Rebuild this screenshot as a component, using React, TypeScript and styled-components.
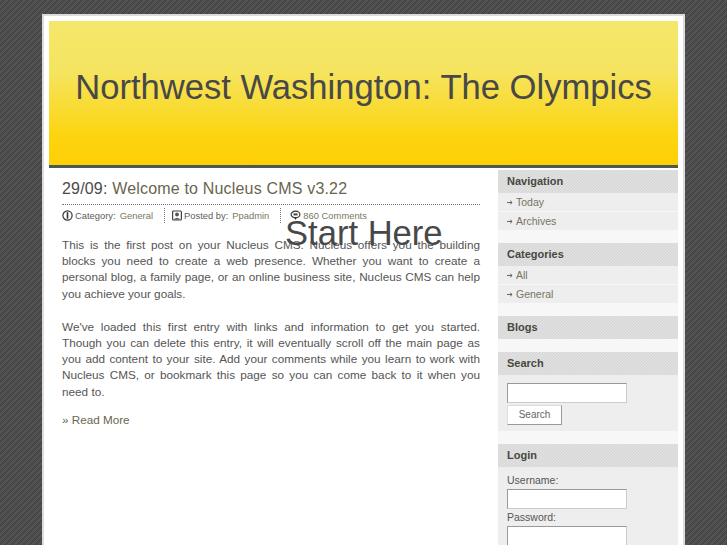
import React from "react";
import styled, { createGlobalStyle } from "styled-components";

const Global = createGlobalStyle`
  html, body { margin: 0; padding: 0; height: 545px; overflow: hidden; }
  body {
    background-color: #4a4a4a;
    background-image:
      repeating-conic-gradient(rgba(255,255,255,0.045) 0 25%, rgba(0,0,0,0.045) 0 50%),
      linear-gradient(135deg, #505050 25%, #454545 25%, #454545 50%, #505050 50%, #505050 75%, #454545 75%);
    background-size: 2px 2px, 6px 6px;
    font-family: "Liberation Sans", Arial, sans-serif;
  }
`;
const Page = styled.div`
  position: relative;
  width: 643px;
  height: 531px;
  margin: 14px 0 0 42px;
  box-sizing: border-box;
  background: #fff;
  border: 2px solid #dcdcdc;
  border-bottom: 0;
  padding: 5px 5px 0;
  overflow: hidden;
`;
const Header = styled.header`
  height: 144px;
  background: linear-gradient(#f4e76b 0%, #f5e460 35%, #fcd40f 80%, #ffcf05 100%);
  border-bottom: 3px solid #4b5858;
  display: flex;
  justify-content: center;
`;
const SiteTitle = styled.h1`
  margin: 46px 0 0;
  font-size: 34.6px;
  line-height: 40px;
  font-weight: 400;
  color: #484848;
  white-space: nowrap;
`;
const Columns = styled.div`
  display: flex;
  justify-content: space-between;
  background: #fff;
`;
const Main = styled.main`
  width: 418px;
  margin-left: 13px;
  padding-top: 11px;
`;
const PostTitle = styled.h2`
  margin: 0;
  font-size: 16px;
  line-height: 19px;
  font-weight: 400;
  color: #4a4a4a;
  letter-spacing: 0.18px;
  padding-bottom: 6px;
  border-bottom: 1px dotted #777;
  a { color: #68654f; }
`;
const Meta = styled.div`
  display: flex;
  height: 20px;
  align-items: center;
  font-size: 9.4px;
  color: #5c5c5c;
`;
const MetaItem = styled.span<{ $last?: boolean }>`
  display: flex;
  align-items: center;
  gap: ${(p) => (p.$last ? "0" : "2px")};
  height: 15px;
  padding-left: ${(p) => (p.$last ? "2px" : "0")};
  padding-right: 11px;
  margin-right: 7px;
  border-right: ${(p) => (p.$last ? "0" : "1px dotted #777")};
  a { color: #7a775f; margin-left: 2px; }
`;
const Para = styled.p`
  margin: 0 0 17px;
  font-size: 11.75px;
  line-height: 16.2px;
  color: #555;
  text-align: justify;
`;
const Body = styled.div`
  padding-top: 12px;
`;
const More = styled.div`
  font-size: 11.7px;
  color: #68654f;
  margin-top: -4px;
`;
const Overlay = styled.div`
  position: absolute;
  left: 241px;
  top: 197px;
  font-size: 34.6px;
  line-height: 40px;
  color: #484848;
  white-space: nowrap;
`;
const Side = styled.aside`
  width: 180px;
  background: #f7f7f7;
  margin-top: 2px;
  height: 380px;
`;
const SideHead = styled.h3`
  margin: 0;
  height: 23px;
  line-height: 22px;
  padding-left: 9px;
  font-size: 11px;
  font-weight: 700;
  color: #484840;
  background-image: linear-gradient(135deg, #d9d9d9 25%, #e3e3e3 25%, #e3e3e3 50%, #d9d9d9 50%, #d9d9d9 75%, #e3e3e3 75%);
  background-size: 3px 3px;
`;
const SideBlock = styled.section`
  margin-bottom: 13px;
`;
const Item = styled.div`
  display: flex;
  align-items: center;
  gap: 3px;
  height: 18px;
  margin-bottom: 1px;
  padding-left: 9px;
  background: #eee;
  font-size: 10.5px;
  color: #77745f;
`;
const Form = styled.div`
  background: #eee;
  padding: 8px 9px 6px;
  font-size: 10.5px;
  color: #555;
`;
const Input = styled.div`
  width: 120px;
  height: 20px;
  box-sizing: border-box;
  background: #fff;
  border: 1px solid #ccc;
  border-top-color: #999;
  border-left-color: #999;
`;
const Button = styled.div`
  width: 55px;
  height: 20px;
  margin-top: 2px;
  box-sizing: border-box;
  background: #fff;
  border: 1px solid #ddd;
  border-right-color: #999;
  border-bottom-color: #999;
  text-align: center;
  line-height: 17px;
  color: #666;
  font-size: 10px;
`;
const Label = styled.div`
  height: 17px;
  line-height: 17px;
  &:first-child { margin-top: -3px; }
`;

const Info = () => (
  <svg width="11" height="11" viewBox="0 0 11 11"><circle cx="5.5" cy="5.5" r="4.6" fill="none" stroke="#333" strokeWidth="1.2"/><rect x="4.7" y="2.2" width="1.6" height="6.5" fill="#333"/></svg>
);
const User = () => (
  <svg width="10" height="11" viewBox="0 0 10 11"><rect x="0.6" y="1" width="8.8" height="9" rx="1" fill="none" stroke="#444" strokeWidth="1.2"/><circle cx="5" cy="4.5" r="1.9" fill="#555"/><path d="M2 9.5c.5-2 5.5-2 6 0z" fill="#555"/></svg>
);
const Bubble = () => (
  <svg width="11" height="11" viewBox="0 0 11 11"><ellipse cx="5.5" cy="4.5" rx="4.4" ry="3.3" fill="none" stroke="#333" strokeWidth="1.2"/><path d="M4 7l1.5 3 1.5-3z" fill="#333"/><rect x="3.5" y="3.4" width="4" height="2" fill="#444"/></svg>
);
const Arrow = () => (
  <svg width="6" height="5" viewBox="0 0 6 5"><path d="M0 2.5h5M3.2 .8l1.9 1.7-1.9 1.7" fill="none" stroke="#555" strokeWidth="0.9"/></svg>
);

export default function App() {
  return (
    <>
      <Global />
      <Page>
        <Header><SiteTitle>Northwest Washington: The Olympics</SiteTitle></Header>
        <Columns>
          <Main>
            <PostTitle>29/09: <a>Welcome to Nucleus CMS v3.22</a></PostTitle>
            <Meta>
              <MetaItem><Info />Category: <a>General</a></MetaItem>
              <MetaItem><User />Posted by: <a>Ppadmin</a></MetaItem>
              <MetaItem $last><Bubble /><a>860 Comments</a></MetaItem>
            </Meta>
            <Body>
              <Para>This is the first post on your Nucleus CMS. Nucleus offers you the building blocks you need to create a web presence. Whether you want to create a personal blog, a family page, or an online business site, Nucleus CMS can help you achieve your goals.</Para>
              <Para>We've loaded this first entry with links and information to get you started. Though you can delete this entry, it will eventually scroll off the main page as you add content to your site. Add your comments while you learn to work with Nucleus CMS, or bookmark this page so you can come back to it when you need to.</Para>
              <More>» Read More</More>
            </Body>
          </Main>
          <Side>
            <SideBlock>
              <SideHead>Navigation</SideHead>
              <Item><Arrow />Today</Item>
              <Item><Arrow />Archives</Item>
            </SideBlock>
            <SideBlock>
              <SideHead>Categories</SideHead>
              <Item><Arrow />All</Item>
              <Item><Arrow />General</Item>
            </SideBlock>
            <SideBlock><SideHead>Blogs</SideHead></SideBlock>
            <SideBlock>
              <SideHead>Search</SideHead>
              <Form>
                <Input />
                <Button>Search</Button>
              </Form>
            </SideBlock>
            <SideBlock>
              <SideHead>Login</SideHead>
              <Form>
                <Label>Username:</Label>
                <Input />
                <Label>Password:</Label>
                <Input />
              </Form>
            </SideBlock>
          </Side>
        </Columns>
        <Overlay>Start Here</Overlay>
      </Page>
    </>
  );
}
